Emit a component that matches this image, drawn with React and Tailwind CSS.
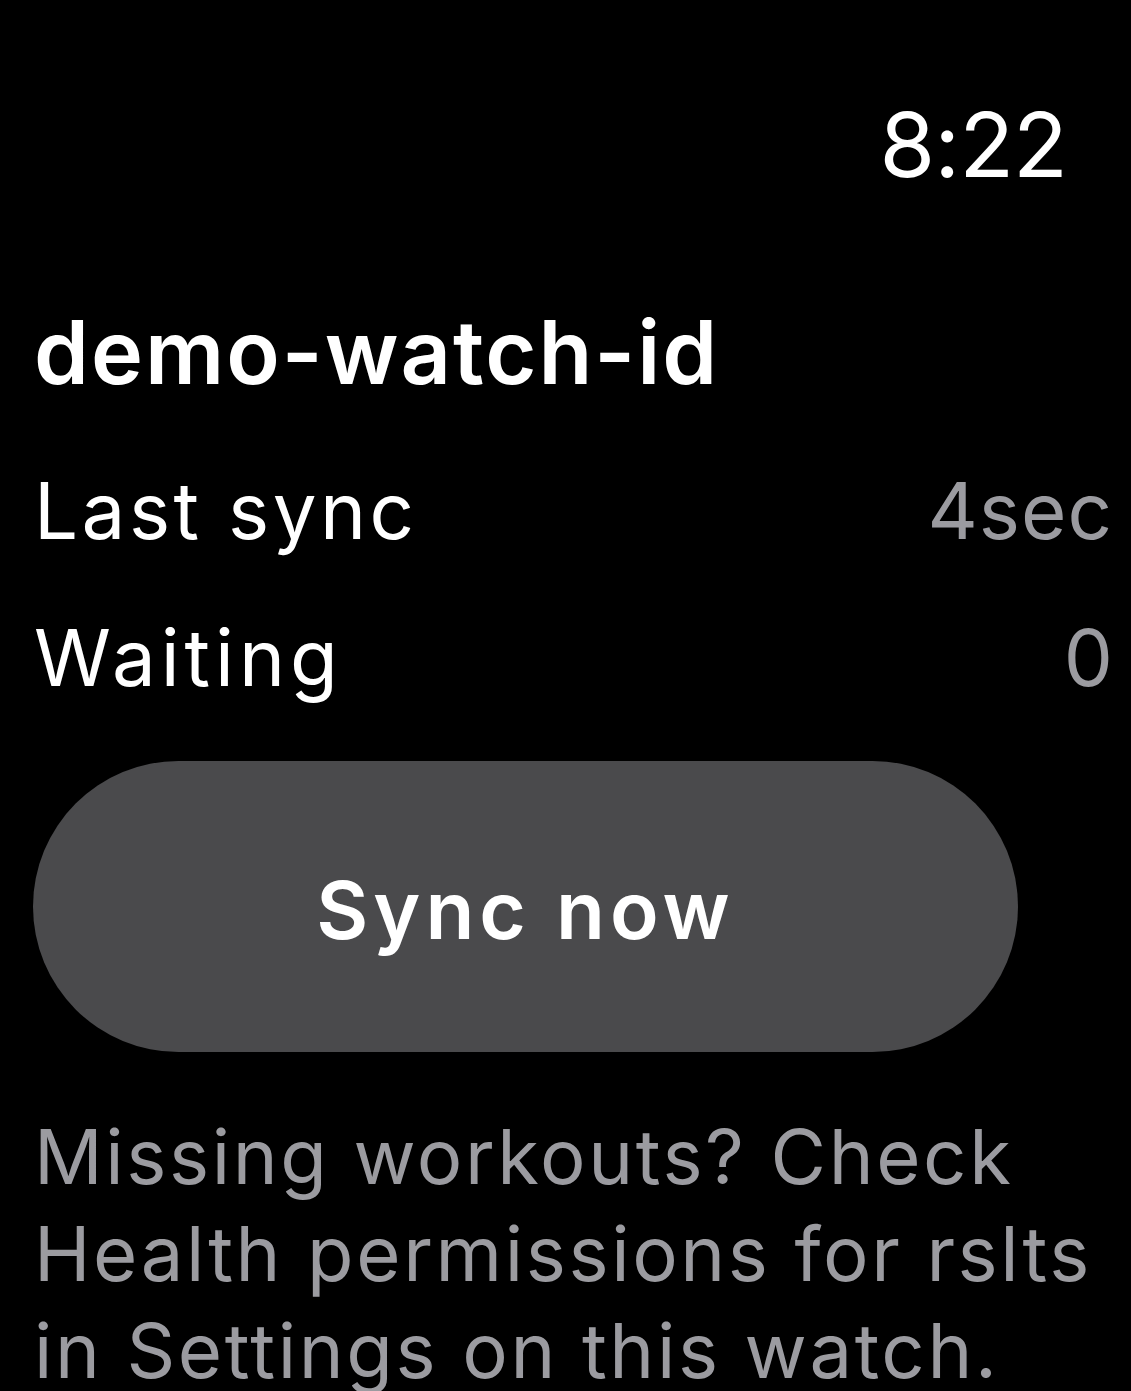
export default function App() {
  return (
    <div className="min-h-[1391px] w-full bg-black text-white font-['Inter','Liberation_Sans',sans-serif] overflow-hidden">
      {/* status bar */}
      <div className="flex justify-end pr-[64px] pt-[100px]">
        <span className="text-[90px] leading-none tracking-[-1px]">8:22</span>
      </div>

      <div className="pl-[34px] pr-[18px]">
        <h1 className="mt-[118px] text-[88px] leading-none font-semibold tracking-[2px]">demo-watch-id</h1>

        <div className="mt-[76px] flex items-baseline justify-between text-[78px] leading-none tracking-[3.5px]">
          <span>Last sync</span>
          <span className="text-[#9b9ba0] tracking-[1px]">4sec</span>
        </div>
        <div className="mt-[69px] flex items-baseline justify-between text-[78px] leading-none tracking-[5px]">
          <span>Waiting</span>
          <span className="text-[#9b9ba0] tracking-normal">0</span>
        </div>
      </div>

      <div className="pl-[33px] pr-[113px] mt-[64px]">
        <button className="w-full h-[291px] rounded-full bg-[#4a4a4c] flex items-center justify-center pt-[6px]">
          <span className="text-[80px] font-semibold text-white tracking-[5px]">Sync now</span>
        </button>
      </div>

      <p className="pl-[34px] pr-[18px] mt-[56px] text-[76px] leading-[97px] tracking-[2.6px] text-[#9b9ba0]">
        Missing workouts? Check Health permissions for rslts in Settings on this watch.
      </p>
    </div>
  );
}
